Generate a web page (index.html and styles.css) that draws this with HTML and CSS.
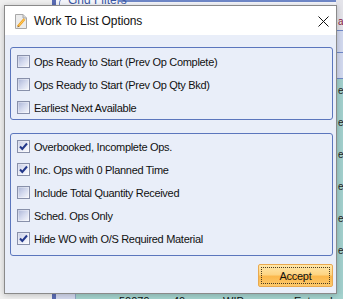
FILE: index.html
```html
<!DOCTYPE html>
<html>
<head>
<meta charset="utf-8">
<link rel="stylesheet" href="styles.css">
</head>
<body>
<div class="scene">
  <div class="bg-panel"></div>
  <div class="bg-bar"></div>
  <div class="bg-topline"></div>
  <div class="bg-grouplabel"><span class="bg-curve"></span>Grid Filters</div>
  <div class="bg-right">
    <span class="bg-rline l1"></span><span class="bg-rline l2"></span><span class="bg-rline l3"></span>
    <span class="bg-rtext t1">a</span>
    <span class="bg-rtext t2">e</span><span class="bg-rtext t3">e</span><span class="bg-rtext t4">e</span>
    <span class="bg-rtext t5">e</span><span class="bg-rtext t6">e</span><span class="bg-rtext t7">e</span>
  </div>
  <div class="bg-bottom">
    <span class="cell c1">50079</span><span class="cell c2">40</span><span class="cell c3">WIP</span><span class="cell c4">Entered</span>
  </div>

  <div class="dialog">
    <div class="titlebar">
      <svg class="app-icon" width="12" height="15" viewBox="0 0 12 15">
        <path d="M0.5 0.5 H8 L11.5 4 V14.5 H0.5 Z" fill="#ececec" stroke="#a8a8a8"/>
        <path d="M8 0.5 V4 H11.5" fill="#d6d6d6" stroke="#a8a8a8"/>
        <path d="M3 12.5 L9.5 5" stroke="#f0a020" stroke-width="2.6"/>
        <path d="M3 12.5 L9.5 5" stroke="#ffd060" stroke-width="1"/>
        <path d="M2.2 13.5 L3.2 11.5 L4.2 12.4 Z" fill="#806040"/>
      </svg>
      <span class="title">Work To List Options</span>
      <svg class="close" width="11" height="11" viewBox="0 0 11 11">
        <path d="M0.5 0.5 L10.5 10.5 M10.5 0.5 L0.5 10.5" stroke="#111" stroke-width="1"/>
      </svg>
    </div>
    <div class="content">
      <div class="group g1">
        <label class="row"><span class="cb"></span><span class="lbl">Ops Ready to Start (Prev Op Complete)</span></label>
        <label class="row"><span class="cb"></span><span class="lbl">Ops Ready to Start (Prev Op Qty Bkd)</span></label>
        <label class="row"><span class="cb"></span><span class="lbl">Earliest Next Available</span></label>
      </div>
      <div class="group g2">
        <label class="row"><span class="cb checked"><svg width="11" height="11" viewBox="0 0 11 11"><path d="M2 5.5 L4.3 8 L9 2.5" fill="none" stroke="#23388a" stroke-width="2"/></svg></span><span class="lbl">Overbooked, Incomplete Ops.</span></label>
        <label class="row"><span class="cb checked"><svg width="11" height="11" viewBox="0 0 11 11"><path d="M2 5.5 L4.3 8 L9 2.5" fill="none" stroke="#23388a" stroke-width="2"/></svg></span><span class="lbl">Inc. Ops with 0 Planned Time</span></label>
        <label class="row"><span class="cb"></span><span class="lbl">Include Total Quantity Received</span></label>
        <label class="row"><span class="cb"></span><span class="lbl">Sched. Ops Only</span></label>
        <label class="row"><span class="cb checked"><svg width="11" height="11" viewBox="0 0 11 11"><path d="M2 5.5 L4.3 8 L9 2.5" fill="none" stroke="#23388a" stroke-width="2"/></svg></span><span class="lbl">Hide WO with O/S Required Material</span></label>
      </div>
      <div class="actions">
        <button class="btn"><span class="btn-focus">Accept</span></button>
      </div>
    </div>
  </div>
</div>
</body>
</html>
```

FILE: styles.css
```css
* { box-sizing: border-box; }
html, body { margin: 0; padding: 0; }
body {
  width: 343px;
  height: 299px;
  overflow: hidden;
  background: #f0f0f0;
  font-family: "Liberation Sans", Arial, sans-serif;
}
.scene {
  position: relative;
  width: 343px;
  height: 299px;
  overflow: hidden;
  padding: 5px 0 0 4px;
}

/* ---- background application (behind the dialog) ---- */
.bg-panel {
  position: absolute;
  left: 56px; top: 0; right: 0; height: 6px;
  background: #f6f7fc;
}
.bg-bar {
  position: absolute;
  left: 52px; top: 0; width: 4px; height: 299px;
  background: #5a6cb4;
}
.bg-topline {
  position: absolute;
  left: 119px; top: 0; right: 0; height: 2px;
  background: #6f88c8;
}
.bg-grouplabel {
  position: absolute;
  left: 58px; top: -7px;
  font-size: 12px;
  color: #3a57a5;
  padding-left: 10px;
}
.bg-curve {
  position: absolute;
  left: 1px; top: 5px;
  width: 8px; height: 10px;
  border-left: 1px solid #6f88c8;
  border-top: 1px solid #6f88c8;
  border-top-left-radius: 5px;
}
.bg-right {
  position: absolute;
  left: 336px; top: 0; width: 7px; height: 299px;
  background: linear-gradient(#e4e4ea 0, #e4e4ea 30px, #d2d9ef 30px, #d2d9ef 78px, #a2d0cd 78px);
}
.bg-rline {
  position: absolute;
  left: 0; right: 0; height: 1px;
  background: #6f88c8;
}
.bg-rline.l1 { top: 30px; }
.bg-rline.l2 { top: 52px; }
.bg-rline.l3 { top: 78px; }
.bg-rtext {
  position: absolute;
  left: 2px;
  font-size: 10px;
  color: #222;
  line-height: 10px;
}
.t1 { top: 17px; color: #8a2040; }
.t2 { top: 86px; } .t3 { top: 118px; } .t4 { top: 150px; }
.t5 { top: 182px; } .t6 { top: 214px; } .t7 { top: 246px; }

.bg-bottom {
  position: absolute;
  left: 75px; top: 294px; right: 0; bottom: 0;
  background: #a4d3ce;
  border-left: 1px solid #8ea6c8;
}
.bg-bottom::before {
  content: "";
  position: absolute;
  left: -20px; top: 0; width: 19px; height: 5px;
  background: #d4daef;
}
.cell {
  position: absolute;
  top: 2px;
  font-size: 11px;
  line-height: 11px;
  color: #111;
}
.c1 { left: 43px; } .c2 { left: 97px; } .c3 { left: 147px; } .c4 { left: 218px; }

/* ---- dialog ---- */
.dialog {
  position: relative;
  width: 333px;
  height: 289px;
  border: 1px solid #8a8a8a;
  background: #e9eef9;
  box-shadow: 0 1px 6px rgba(0, 0, 0, 0.22);
  display: flex;
  flex-direction: column;
}
.titlebar {
  height: 29px;
  background: #ffffff;
  display: flex;
  align-items: center;
  padding: 0 7px 0 10px;
  flex: none;
}
.app-icon { flex: none; margin-top: 1px; }
.title {
  margin-left: 7px;
  font-size: 12px;
  letter-spacing: -0.1px;
  color: #111;
  flex: 1;
}
.close { flex: none; margin-top: 1px; }

.content {
  flex: 1;
  padding: 12px 3px 0 5px;
  display: flex;
  flex-direction: column;
}
.group {
  border: 1px solid #5b76bd;
  border-radius: 3px;
  display: flex;
  flex-direction: column;
  padding-left: 6px;
}
.g1 { height: 73px; padding-top: 2px; }
.g2 { height: 123px; padding-top: 1px; margin-top: 13px; }
.row {
  height: 23px;
  display: flex;
  align-items: center;
}
.cb {
  width: 13px;
  height: 13px;
  flex: none;
  border: 1px solid #8890aa;
  background: linear-gradient(135deg, #aab4d6 0%, #d4daee 50%, #f7f8fc 100%);
  box-shadow: inset 0 0 0 1px rgba(255,255,255,0.35);
  display: flex;
  align-items: center;
  justify-content: center;
}
.cb.checked {
  background: linear-gradient(135deg, #c4cbe4 0%, #e6e9f5 50%, #fbfbfe 100%);
}
.cb svg { display: block; }
.lbl {
  margin-left: 4px;
  font-size: 11px;
  letter-spacing: -0.3px;
  color: #111;
  white-space: nowrap;
}

.actions {
  display: flex;
  justify-content: flex-end;
  margin-top: 8px;
}
.btn {
  width: 75px;
  height: 23px;
  padding: 2px;
  border: 1px solid #e9a94f;
  border-radius: 2px;
  background: linear-gradient(#ffe7ab 0%, #fdd584 45%, #fbb84c 55%, #fdca6c 100%);
  font-family: "Liberation Sans", Arial, sans-serif;
  font-size: 11px;
  letter-spacing: -0.3px;
  color: #111;
  display: flex;
}
.btn-focus {
  flex: 1;
  border: 1px dotted #4a3a20;
  display: flex;
  align-items: center;
  justify-content: center;
}
```
